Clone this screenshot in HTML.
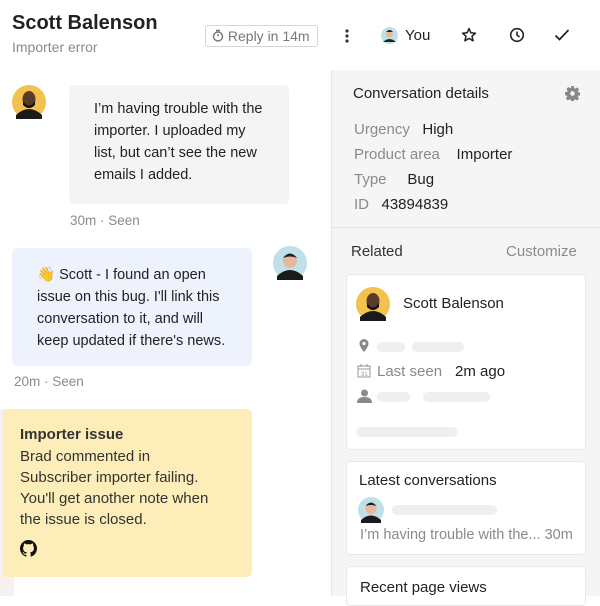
<!DOCTYPE html>
<html><head><meta charset="utf-8"><style>
*{margin:0;padding:0;box-sizing:border-box}
body{width:600px;height:596px;overflow:hidden;background:#fff;font-family:"Liberation Sans",sans-serif;color:#222;position:relative}
.a{position:absolute;white-space:nowrap}
.g{color:#8a8a8a}
.bar{position:absolute;height:10px;border-radius:5px;background:#efefef}
</style></head><body>
<div class="a" style="left:12px;top:12px;font-size:20px;font-weight:bold;color:#222">Scott Balenson</div>
<div class="a g" style="left:12px;top:39px;font-size:14px">Importer error</div>
<div class="a" style="left:205px;top:25px;width:113px;height:22px;border:1px solid #d6d6d6;border-radius:3px;font-size:14px;color:#777;line-height:20px;padding-left:6px">
<svg width="12" height="13" viewBox="0 0 12 13" style="vertical-align:-1px"><circle cx="6" cy="7.5" r="4.5" fill="none" stroke="#777" stroke-width="1.4"/><path d="M4 1.5h4M6 7.5V5" stroke="#777" stroke-width="1.4"/></svg> Reply in 14m</div>
<svg class="a" style="left:344px;top:28px" width="6" height="16"><circle cx="3" cy="3" r="1.6" fill="#333"/><circle cx="3" cy="8" r="1.6" fill="#333"/><circle cx="3" cy="13" r="1.6" fill="#333"/></svg>
<svg class="a" style="left:381px;top:27px" width="17" height="17"><circle cx="8.5" cy="8.5" r="8.5" fill="#bfe0e8"/><circle cx="8.5" cy="7" r="3.5" fill="#e8b89a"/><path d="M2 15q6.5-6 13 0" fill="#222"/><path d="M5 5q3.5-4 7 0" fill="#222"/></svg>
<div class="a" style="left:405px;top:27px;font-size:15px">You</div>
<svg class="a" style="left:461px;top:27px" width="16" height="16" viewBox="0 0 16 16"><path d="M8 1.5l1.9 4.3 4.6.4-3.5 3 1.1 4.6L8 11.4l-4.1 2.4 1.1-4.6-3.5-3 4.6-.4z" fill="none" stroke="#222" stroke-width="1.5" stroke-linejoin="round"/></svg>
<svg class="a" style="left:509px;top:27px" width="16" height="16"><circle cx="8" cy="8" r="6.3" fill="none" stroke="#222" stroke-width="1.6"/><path d="M8 4.5V8l2.5 2" fill="none" stroke="#222" stroke-width="1.6"/></svg>
<svg class="a" style="left:554px;top:28px" width="16" height="14"><path d="M1.5 7.5l4 4L14.5 2" fill="none" stroke="#222" stroke-width="1.7"/></svg>

<!-- left -->
<div class="a" style="left:0;top:410px;width:14px;height:186px;background:#f6f1ef"></div>
<svg class="a" style="left:12px;top:85px" width="34" height="34"><circle cx="17" cy="17" r="17" fill="#f2c14e"/><ellipse cx="17" cy="14" rx="6.5" ry="8" fill="#5a3a28"/><path d="M4 30q13-12 26 0v4H4z" fill="#1a1a1a"/><path d="M11 16q6 9 12 0v4q-6 6-12 0z" fill="#111"/></svg>
<div class="a" style="left:69px;top:85px;width:220px;height:119px;background:#f4f4f4;border-radius:5px"></div>
<div class="a" style="left:94px;top:98px;font-size:14.5px;line-height:22px;color:#222">I’m having trouble with the<br>importer. I uploaded my<br>list, but can’t see the new<br>emails I added.</div>
<div class="a g" style="left:70px;top:213px;font-size:13.5px">30m · Seen</div>

<div class="a" style="left:12px;top:248px;width:240px;height:118px;background:#eef2fd;border-radius:5px"></div>
<div class="a" style="left:37px;top:264px;font-size:14.5px;line-height:22px;color:#222">👋 Scott - I found an open<br>issue on this bug. I'll link this<br>conversation to it, and will<br>keep updated if there's news.</div>
<svg class="a" style="left:273px;top:246px" width="34" height="34"><circle cx="17" cy="17" r="17" fill="#bfe0e8"/><circle cx="17" cy="15" r="7" fill="#e8b89a"/><path d="M10 12q7-9 14 0q-7-3-14 0z" fill="#222"/><path d="M4 30q13-12 26 0v4H4z" fill="#1a1a1a"/></svg>
<div class="a g" style="left:14px;top:374px;font-size:13.5px">20m · Seen</div>

<div class="a" style="left:3px;top:409px;width:249px;height:168px;background:#fdedb8;border-radius:0 5px 5px 0"></div>
<div class="a" style="left:20px;top:426px;font-size:15px;font-weight:bold;color:#333">Importer issue</div>
<div class="a" style="left:20px;top:446px;font-size:15px;line-height:21px;color:#333">Brad commented in<br>Subscriber importer failing.<br>You'll get another note when<br>the issue is closed.</div>
<svg class="a" style="left:20px;top:540px" width="17" height="17" viewBox="0 0 16 16"><path fill="#111" d="M8 0C3.58 0 0 3.580 0 8c0 3.54 2.29 6.53 5.470 7.59.4.07.55-.17.55-.38v-1.33c-2.23.48-2.7-1.07-2.7-1.07-.36-.92-.89-1.170-.89-1.17-.73-.5.05-.49.05-.49.8.06 1.23.83 1.23.83.72 1.23 1.88.87 2.34.66.07-.52.28-.87.5-1.07-1.78-.2-3.64-.89-3.64-3.95 0-.87.31-1.59.82-2.15-.08-.2-.36-1.02.08-2.12 0 0 .67-.21 2.2.82a7.6 7.6 0 014 0c1.53-1.04 2.2-.82 2.2-.82.44 1.1.16 1.92.08 2.12.51.56.82 1.27.82 2.15 0 3.07-1.870 3.75-3.65 3.95.29.25.54.73.54 1.48v2.2c0 .21.15.46.55.38A8.01 8.01 0 0016 8c0-4.42-3.58-8-8-8z"/></svg>

<!-- right panel -->
<div class="a" style="left:331px;top:70px;width:269px;height:526px;background:#f5f5f5;border-left:1px solid #e6e6e6"></div>
<div class="a" style="left:353px;top:85px;font-size:15px;color:#222">Conversation details</div>
<svg class="a" style="left:565px;top:86px" width="15" height="15" viewBox="0 0 16 16"><path fill="#888" d="M6.6 0h2.8l.4 2.2 1.3.6 1.9-1.3 2 2-1.3 1.9.6 1.3 2.2.4v2.8l-2.2.4-.6 1.3 1.3 1.9-2 2-1.9-1.3-1.3.6-.4 2.2H6.6l-.4-2.2-1.3-.6-1.9 1.3-2-2 1.3-1.9-.6-1.3L0 9.4V6.6l2.2-.4.6-1.3L1.5 3l2-2 1.9 1.3 1.3-.6z"/><circle cx="8" cy="8" r="2.5" fill="#f5f5f5"/></svg>
<div class="a" style="left:354px;top:117px;font-size:15px;line-height:25px"><span class="g">Urgency</span>&nbsp;&nbsp; High<br><span class="g">Product area</span>&nbsp;&nbsp;&nbsp; Importer<br><span class="g">Type</span>&nbsp;&nbsp;&nbsp;&nbsp; Bug<br><span class="g">ID</span>&nbsp;&nbsp; 43894839</div>
<div class="a" style="left:332px;top:227px;width:268px;height:1px;background:#e4e4e4"></div>
<div class="a" style="left:351px;top:243px;font-size:15px;color:#333">Related</div>
<div class="a g" style="left:506px;top:243px;font-size:15px">Customize</div>

<div class="a" style="left:346px;top:274px;width:240px;height:176px;background:#fff;border:1px solid #e8e8e8;border-radius:4px"></div>
<svg class="a" style="left:356px;top:287px" width="34" height="34"><circle cx="17" cy="17" r="17" fill="#f2c14e"/><ellipse cx="17" cy="14" rx="6.5" ry="8" fill="#5a3a28"/><path d="M4 30q13-12 26 0v4H4z" fill="#1a1a1a"/><path d="M11 16q6 9 12 0v4q-6 6-12 0z" fill="#111"/></svg>
<div class="a" style="left:403px;top:295px;font-size:15px;color:#222">Scott Balenson</div>
<svg class="a" style="left:359px;top:339px" width="10" height="14"><path d="M5 0a4.5 4.5 0 014.5 4.5C9.5 8 5 13 5 13S.5 8 .5 4.5A4.5 4.5 0 015 0z" fill="#8a8a8a"/><circle cx="5" cy="4.5" r="1.6" fill="#fff"/></svg>
<div class="bar" style="left:377px;top:342px;width:28px"></div><div class="bar" style="left:412px;top:342px;width:52px"></div>
<svg class="a" style="left:357px;top:364px" width="14" height="14"><rect x="1" y="2" width="12" height="11" fill="none" stroke="#999" stroke-width="1"/><path d="M1 5h12M4 0v3M10 0v3" stroke="#999"/><text x="4" y="12" font-size="6" fill="#999" font-family="Liberation Sans">31</text></svg>
<div class="a g" style="left:377px;top:363px;font-size:15px">Last seen</div>
<div class="a" style="left:455px;top:363px;font-size:15px;color:#222">2m ago</div>
<svg class="a" style="left:357px;top:389px" width="15" height="14"><circle cx="7.5" cy="4" r="3.5" fill="#8a8a8a"/><path d="M0 14q0-6 7.5-6T15 14z" fill="#8a8a8a"/></svg>
<div class="bar" style="left:377px;top:392px;width:33px"></div><div class="bar" style="left:423px;top:392px;width:67px"></div>
<div class="bar" style="left:356px;top:427px;width:102px"></div>

<div class="a" style="left:346px;top:461px;width:240px;height:94px;background:#fff;border:1px solid #e8e8e8;border-radius:4px"></div>
<div class="a" style="left:359px;top:472px;font-size:15px;color:#222">Latest conversations</div>
<svg class="a" style="left:358px;top:497px" width="26" height="26"><circle cx="13" cy="13" r="13" fill="#bfe0e8"/><circle cx="13" cy="11.5" r="5.5" fill="#e8b89a"/><path d="M7.5 9q5.5-7 11 0q-5.5-2-11 0z" fill="#222"/><path d="M3 23q10-9 20 0v3H3z" fill="#1a1a1a"/></svg>
<div class="bar" style="left:392px;top:505px;width:105px"></div>
<div class="a g" style="left:360px;top:527px;font-size:14.5px">I’m having trouble with the... 30m</div>

<div class="a" style="left:346px;top:566px;width:240px;height:40px;background:#fff;border:1px solid #e8e8e8;border-radius:4px"></div>
<div class="a" style="left:360px;top:579px;font-size:15px;color:#222">Recent page views</div>
</body></html>
